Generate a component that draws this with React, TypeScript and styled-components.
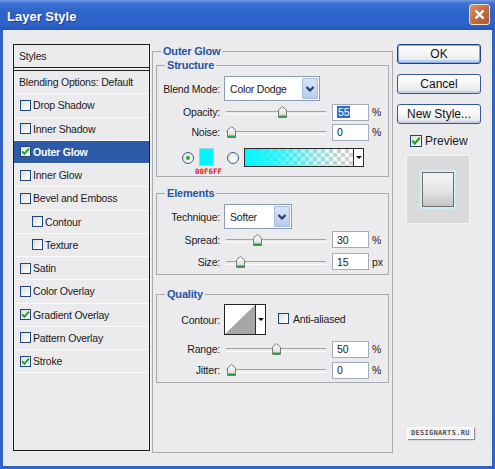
import styled, { createGlobalStyle } from 'styled-components';

const GlobalStyle = createGlobalStyle`
  html, body {
    margin: 0;
    padding: 0;
    background: #ffffff;
  }
  body {
    font-family: "Liberation Sans", Arial, sans-serif;
    font-size: 10.5px;
    letter-spacing: -0.2px;
    color: #1a1a1a;
  }
  * {
    box-sizing: border-box;
  }
`;

type StyleItem = {
  label: string;
  checked?: boolean;
  selected?: boolean;
  indent?: boolean;
};

const styleItems: StyleItem[] = [
  { label: 'Drop Shadow' },
  { label: 'Inner Shadow' },
  { label: 'Outer Glow', checked: true, selected: true },
  { label: 'Inner Glow' },
  { label: 'Bevel and Emboss' },
  { label: 'Contour', indent: true },
  { label: 'Texture', indent: true },
  { label: 'Satin' },
  { label: 'Color Overlay' },
  { label: 'Gradient Overlay', checked: true },
  { label: 'Pattern Overlay' },
  { label: 'Stroke', checked: true },
];

function CheckMark({ size = 9 }: { size?: number }) {
  return (
    <svg width={size} height={size} viewBox="0 0 9 9">
      <path d="M1.2 4.3 L3.4 6.8 L7.9 1.6" fill="none" stroke="#1f9e24" strokeWidth="1.9" />
    </svg>
  );
}

function Chevron() {
  return (
    <svg width="10" height="8" viewBox="0 0 10 8">
      <path d="M1.5 2 L5 5.5 L8.5 2" fill="none" stroke="#1d3874" strokeWidth="2.2" />
    </svg>
  );
}

function SliderThumb() {
  return (
    <svg width="9" height="12" viewBox="0 0 9 12">
      <defs>
        <linearGradient id="thumbFill" x1="0" y1="0" x2="0" y2="1">
          <stop offset="0" stopColor="#ffffff" />
          <stop offset="1" stopColor="#d6d6d6" />
        </linearGradient>
      </defs>
      <path d="M0.5 4 L4.5 0.5 L8.5 4 L8.5 11.5 L0.5 11.5 Z" fill="url(#thumbFill)" stroke="#7a7a7a" />
      <rect x="1" y="9.5" width="7" height="2" fill="#22a23c" />
    </svg>
  );
}

function Slider({ pos }: { pos: number }) {
  return (
    <Track>
      <Thumb style={{ left: `${pos}px` }}>
        <SliderThumb />
      </Thumb>
    </Track>
  );
}

function CheckBox({ checked, size = 11 }: { checked?: boolean; size?: number }) {
  return <Box $size={size}>{checked && <CheckMark size={size - 2} />}</Box>;
}

export default function App() {
  return (
    <>
      <GlobalStyle />
      <Window>
        <TitleBar>
          <Title>Layer Style</Title>
          <CloseButton>
            <svg width="11" height="11" viewBox="0 0 11 11">
              <path d="M1.5 1.5 L9.5 9.5 M9.5 1.5 L1.5 9.5" stroke="#ffffff" strokeWidth="2.4" />
            </svg>
          </CloseButton>
        </TitleBar>

        <Body>
          <StylesPanel>
            <StylesHeader>Styles</StylesHeader>
            <StylesList>
              <StyleRow>Blending Options: Default</StyleRow>
              {styleItems.map((item) => (
                <StyleRow key={item.label} $selected={item.selected} $indent={item.indent} $check>
                  <CheckBox checked={item.checked} />
                  <span>{item.label}</span>
                </StyleRow>
              ))}
            </StylesList>
          </StylesPanel>

          <MainGroup>
            <Legend>Outer Glow</Legend>

            <Group $top={1}>
              <Legend>Structure</Legend>
              <Row $h={25} $mt={4}>
                <Label>Blend Mode:</Label>
                <Select $w={96}>
                  <SelectText>Color Dodge</SelectText>
                  <SelectButton>
                    <Chevron />
                  </SelectButton>
                </Select>
              </Row>
              <Row $h={20} $mt={1}>
                <Label>Opacity:</Label>
                <Slider pos={52} />
                <Field>
                  <Selected>55</Selected>
                </Field>
                <Unit>%</Unit>
              </Row>
              <Row $h={20}>
                <Label>Noise:</Label>
                <Slider pos={1} />
                <Field>0</Field>
                <Unit>%</Unit>
              </Row>
              <ColorRow>
                <Radio $checked />
                <SwatchWrap>
                  <Swatch />
                  <SwatchCode>00F6FF</SwatchCode>
                </SwatchWrap>
                <Radio />
                <GradientBar>
                  <GradientFill />
                  <DropArrow />
                </GradientBar>
              </ColorRow>
            </Group>

            <Group $top={10}>
              <Legend>Elements</Legend>
              <Row $h={25} $mt={4}>
                <Label>Technique:</Label>
                <Select $w={68}>
                  <SelectText>Softer</SelectText>
                  <SelectButton>
                    <Chevron />
                  </SelectButton>
                </Select>
              </Row>
              <Row $h={21}>
                <Label>Spread:</Label>
                <Slider pos={27} />
                <Field>30</Field>
                <Unit>%</Unit>
              </Row>
              <Row $h={21} $mt={1}>
                <Label>Size:</Label>
                <Slider pos={10} />
                <Field>15</Field>
                <Unit>px</Unit>
              </Row>
            </Group>

            <Group $top={13}>
              <Legend>Quality</Legend>
              <Row $h={31} $mt={3}>
                <Label>Contour:</Label>
                <ContourBox>
                  <ContourCurve>
                    <svg width="30" height="29" viewBox="0 0 30 29">
                      <polygon points="0,29 30,0 30,29" fill="#a6a6a6" />
                    </svg>
                  </ContourCurve>
                  <DropArrow />
                </ContourBox>
                <AntiAlias>
                  <CheckBox />
                  <span>Anti-aliased</span>
                </AntiAlias>
              </Row>
              <Row $h={20} $mt={4}>
                <Label>Range:</Label>
                <Slider pos={46} />
                <Field>50</Field>
                <Unit>%</Unit>
              </Row>
              <Row $h={20} $mt={1}>
                <Label>Jitter:</Label>
                <Slider pos={1} />
                <Field>0</Field>
                <Unit>%</Unit>
              </Row>
            </Group>
          </MainGroup>

          <SideColumn>
            <DialogButton $primary>OK</DialogButton>
            <DialogButton>Cancel</DialogButton>
            <DialogButton>New Style...</DialogButton>
            <PreviewToggle>
              <CheckBox checked size={12} />
              <span>Preview</span>
            </PreviewToggle>
            <PreviewBox>
              <PreviewSample />
            </PreviewBox>
            <Watermark>DESIGNARTS.RU</Watermark>
          </SideColumn>
        </Body>
      </Window>
    </>
  );
}

const Window = styled.div`
  width: 495px;
  height: 469px;
  display: flex;
  flex-direction: column;
  background: #ebebee;
`;

const TitleBar = styled.div`
  height: 30px;
  display: flex;
  align-items: center;
  padding: 2px 5px 0 7px;
  background: linear-gradient(
    to bottom,
    #6d9ae6 0%,
    #3b6fd2 12%,
    #2c62c9 45%,
    #2d63ca 80%,
    #2457bd 100%
  );
`;

const Title = styled.span`
  color: #ffffff;
  font-weight: 700;
  font-size: 13px;
  letter-spacing: 0;
  text-shadow: 1px 1px 0 #17409a;
`;

const CloseButton = styled.div`
  margin-left: auto;
  margin-top: -3px;
  width: 21px;
  height: 21px;
  border-radius: 3px;
  border: 1px solid #f3e2d6;
  background: linear-gradient(135deg, #d99066 0%, #bf6b3e 55%, #a85a33 100%);
  display: flex;
  align-items: center;
  justify-content: center;
`;

const Body = styled.div`
  flex: 1;
  display: flex;
  align-items: flex-start;
  padding: 14px 11px 0 10px;
  border: 3px solid #2e63c8;
  border-top: none;
`;

const StylesPanel = styled.div`
  width: 137px;
  height: 407px;
  border: 1px solid #1f1f1f;
  display: flex;
  flex-direction: column;
`;

const StylesHeader = styled.div`
  height: 23px;
  display: flex;
  align-items: center;
  padding-left: 5px;
  border-bottom: 1px solid #1f1f1f;
  margin-bottom: 2px;
`;

const StylesList = styled.div`
  flex: 1;
  border-top: 1px solid #1f1f1f;
`;

const StyleRow = styled.div<{ $selected?: boolean; $indent?: boolean; $check?: boolean }>`
  height: 23.25px;
  display: flex;
  align-items: center;
  gap: 2px;
  padding-left: ${(p) => (p.$indent ? 18 : p.$check ? 6 : 5)}px;
  border-bottom: 1px solid #fbfbfd;
  background: ${(p) => (p.$selected ? '#2d5ba8' : 'transparent')};
  color: ${(p) => (p.$selected ? '#ffffff' : '#1a1a1a')};
  font-weight: ${(p) => (p.$selected ? 700 : 400)};
  white-space: nowrap;
`;

const Box = styled.span<{ $size: number }>`
  width: ${(p) => p.$size}px;
  height: ${(p) => p.$size}px;
  flex: none;
  border: 1px solid #1f4679;
  background: linear-gradient(135deg, #dcdcd6 0%, #f3f3ef 60%, #ffffff 100%);
  display: flex;
  align-items: center;
  justify-content: center;
`;

const MainGroup = styled.fieldset`
  width: 241px;
  height: 408px;
  margin: 1px 0 0 2px;
  padding: 0;
  border: 1px solid #a9a9ae;
  min-width: 0;
`;

const Legend = styled.legend`
  margin-left: 8px;
  padding: 0 2px;
  font-weight: 700;
  font-size: 11px;
  line-height: 13px;
  color: #2456a6;
`;

const Group = styled.fieldset<{ $top: number }>`
  margin: ${(p) => p.$top}px 3px 0;
  padding: 0 0 2px 0;
  border: 1px solid #a9a9ae;
  min-width: 0;
`;

const Row = styled.div<{ $h: number; $mt?: number }>`
  height: ${(p) => p.$h}px;
  margin-top: ${(p) => p.$mt ?? 0}px;
  display: flex;
  align-items: center;
`;

const Label = styled.span`
  width: 63px;
  margin-right: 4px;
  flex: none;
  text-align: right;
  white-space: nowrap;
`;

const Select = styled.div<{ $w: number }>`
  width: ${(p) => p.$w}px;
  height: 25px;
  display: flex;
  border: 1px solid #8a9bb6;
  background: #ffffff;
`;

const SelectText = styled.span`
  flex: 1;
  display: flex;
  align-items: center;
  padding-left: 5px;
  white-space: nowrap;
`;

const SelectButton = styled.span`
  width: 16px;
  margin: 1px;
  border: 1px solid #a9bce0;
  border-radius: 1px;
  background: linear-gradient(to bottom, #d9e4f8, #b9cbef);
  display: flex;
  align-items: center;
  justify-content: center;
`;

const Track = styled.div`
  position: relative;
  width: 100px;
  height: 12px;
  margin-left: 2px;
  flex: none;

  &::before {
    content: '';
    position: absolute;
    left: 0;
    right: 0;
    top: 5px;
    height: 2px;
    border-top: 1px solid #a3a3a6;
    border-bottom: 1px solid #ffffff;
  }
`;

const Thumb = styled.span`
  position: absolute;
  top: 0;
  display: flex;
`;

const Field = styled.div`
  width: 37px;
  height: 17px;
  margin-left: 6px;
  flex: none;
  border: 1px solid #a3acb9;
  background: #ffffff;
  padding-left: 4px;
  display: flex;
  align-items: center;
`;

const Selected = styled.span`
  background: #3169c6;
  color: #ffffff;
  padding: 0 1px;
`;

const Unit = styled.span`
  margin-left: 3px;
`;

const ColorRow = styled.div`
  display: flex;
  align-items: flex-start;
  margin-top: 6px;
  height: 26px;
`;

const Radio = styled.span<{ $checked?: boolean }>`
  width: 12px;
  height: 12px;
  margin: 4px 0 0 ${(p) => (p.$checked ? 25 : 13)}px;
  flex: none;
  border-radius: 50%;
  border: 1px solid #3d5f8c;
  background: radial-gradient(circle at 65% 65%, #ffffff 0%, #e6e6e2 70%, #d2d2cc 100%);
  display: flex;
  align-items: center;
  justify-content: center;

  &::after {
    content: '';
    width: 4px;
    height: 4px;
    border-radius: 50%;
    background: ${(p) => (p.$checked ? '#2aa52a' : 'transparent')};
  }
`;

const SwatchWrap = styled.div`
  width: 15px;
  margin-left: 5px;
  flex: none;
  display: flex;
  flex-direction: column;
`;

const Swatch = styled.span`
  width: 15px;
  height: 18px;
  background: #00f6ff;
  border: 1px solid #8fd8dd;
`;

const SwatchCode = styled.span`
  margin: 2px 0 0 -4px;
  font-family: "DejaVu Sans Mono", monospace;
  font-weight: 700;
  font-size: 7.5px;
  line-height: 7px;
  letter-spacing: 0;
  color: #e01818;
  white-space: nowrap;
`;

const GradientBar = styled.div`
  width: 120px;
  height: 19px;
  margin-left: 5px;
  display: flex;
  border: 1px solid #2a2a2a;
`;

const GradientFill = styled.span`
  flex: 1;
  background:
    linear-gradient(to right, #00f6ff 0%, rgba(0, 246, 255, 0.75) 30%, rgba(0, 246, 255, 0.25) 65%, rgba(0, 246, 255, 0) 90%),
    conic-gradient(#cfcfcf 25%, #ffffff 0 50%, #cfcfcf 0 75%, #ffffff 0) 0 0 / 8px 8px;
`;

const DropArrow = styled.span`
  width: 10px;
  flex: none;
  border-left: 1px solid #2a2a2a;
  background: #ffffff;
  display: flex;
  align-items: center;
  justify-content: center;

  &::after {
    content: '';
    border-left: 3px solid transparent;
    border-right: 3px solid transparent;
    border-top: 3px solid #111111;
  }
`;

const ContourBox = styled.div`
  width: 42px;
  height: 31px;
  display: flex;
  border: 1px solid #222222;
  background: #ffffff;
`;

const ContourCurve = styled.span`
  flex: 1;
  display: flex;
`;

const AntiAlias = styled.div`
  display: flex;
  align-items: center;
  gap: 4px;
  margin-left: 12px;
  margin-bottom: 2px;
`;

const SideColumn = styled.div`
  width: 84px;
  height: 100%;
  margin-left: 4px;
  display: flex;
  flex-direction: column;
  gap: 10px;
`;

const DialogButton = styled.div<{ $primary?: boolean }>`
  height: 20px;
  border: 1px solid ${(p) => (p.$primary ? '#1f417c' : '#36589a')};
  border-radius: 3px;
  background: linear-gradient(to bottom, #ffffff 0%, #f4f4f6 55%, #e2e3e8 100%);
  box-shadow: ${(p) =>
    p.$primary
      ? 'inset 0 0 0 1px #88a9e2, inset 0 -2px 0 1px #bcd0f0'
      : 'inset 0 -2px 0 #c7d3ea'};
  display: flex;
  align-items: center;
  justify-content: center;
  font-size: 12px;
  letter-spacing: 0;
  color: #111111;
`;

const PreviewToggle = styled.div`
  display: flex;
  align-items: center;
  gap: 3px;
  margin: 0 0 0 13px;
  font-size: 12px;
  letter-spacing: 0;
`;

const PreviewBox = styled.div`
  width: 64px;
  height: 69px;
  margin: -3px 0 0 9px;
  border: 1px solid #f4f4f6;
  background: #d9d9db;
  display: flex;
  align-items: center;
  justify-content: center;
`;

const PreviewSample = styled.div`
  width: 32px;
  height: 35px;
  margin-bottom: 1px;
  border: 1px solid #6e6e6e;
  background: linear-gradient(to bottom, #f4f4f4 0%, #e4e4e4 55%, #c4c4c4 100%);
  box-shadow: 0 0 2px 2px #c9f3f8;
`;

const Watermark = styled.div`
  margin: auto 0 27px 10px;
  align-self: flex-start;
  padding: 1px 3px;
  background: #f3f3f3;
  border: 1px solid #ffffff;
  box-shadow: 1px 1px 1px rgba(0, 0, 0, 0.4);
  font-family: "DejaVu Sans Mono", monospace;
  font-weight: 700;
  font-size: 7px;
  line-height: 8px;
  letter-spacing: 0.3px;
  color: #555555;
`;
